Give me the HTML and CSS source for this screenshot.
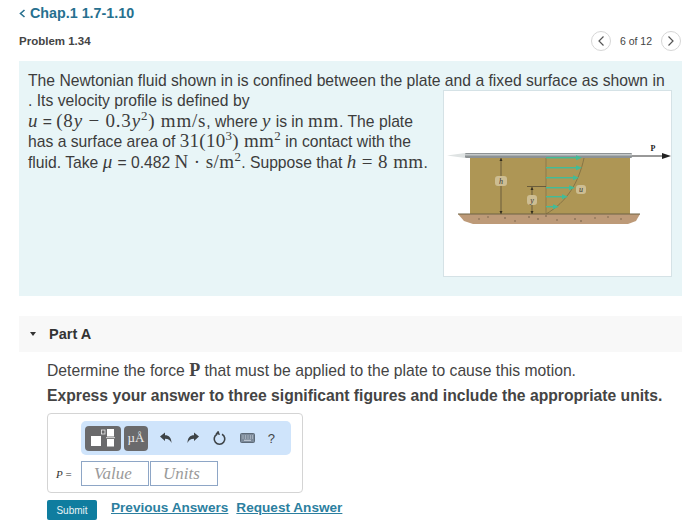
FILE: index.html
```html
<!DOCTYPE html>
<html lang="en">
<head>
  <meta charset="UTF-8" />
  <title>Problem 1.34</title>
  <link rel="stylesheet" href="styles.css">
</head>
<body>
  <a class="back" href="#"><svg class="back-icon" width="7" height="9" viewBox="0 0 7 9"><path d="M5.500 1 1.500 4.500l4 3.500" fill="none" stroke="#27708f" stroke-width="1.600"/></svg>Chap.1 1.7-1.10</a>

  <div class="prob-head">
    <span class="prob-title">Problem 1.34</span>
    <div class="pager">
      <span class="circle"><svg width="8" height="12" viewBox="0 0 8 12"><path d="M6.5 1.5 2 6l4.500 4.500" fill="none" stroke="#555" stroke-width="1.200"/></svg></span>
      <span class="count">6 of 12</span>
      <span class="circle"><svg width="8" height="12" viewBox="0 0 8 12"><path d="M1.500 1.500 6 6l-4.500 4.500" fill="none" stroke="#555" stroke-width="1.200"/></svg></span>
    </div>
  </div>

  <section class="panel">
    <p class="first">The Newtonian fluid shown in is confined between the plate and a fixed surface as shown in</p>
    <div class="panel-row">
      <p class="body-text">
        . Its velocity profile is defined by<br>
        <span class="m"><i>u</i></span> = <span class="m">(8<i>y</i> &minus; 0.3<i>y</i><sup>2</sup>) mm/s</span>, where <span class="m"><i>y</i></span> is in <span class="m">mm</span>. The plate<br>
        has a surface area of <span class="m big">31(10<sup>3</sup>) mm<sup>2</sup></span> in contact with the<br>
        fluid. Take <span class="m"><i>&mu;</i></span> = 0.482 <span class="m tight">N &middot; s/m<sup>2</sup></span>. Suppose that <span class="m tight"><i>h</i> = 8 mm</span>.
      </p>
      <div class="figure">
        <svg width="227" height="185" viewBox="1 1 227 185">
          <path d="M4 65.500 22 63v5z" fill="#dfe3e3"/>
          <rect x="27" y="68" width="160" height="56" fill="#ae9655"/>
          <path d="M15 124h182l-4 7-8 3H30l-9-3z" fill="#bd9a78"/>
          <path d="M15 124h182" stroke="#6e6244" stroke-width="1"/>
          <g fill="#6b5a44">
            <circle cx="36" cy="129" r=".7"/><circle cx="45" cy="127" r=".7"/><circle cx="62" cy="128" r=".8"/><circle cx="72" cy="131" r=".7"/>
            <circle cx="86" cy="127" r=".8"/><circle cx="95" cy="129" r=".8"/><circle cx="103" cy="126" r=".8"/><circle cx="114" cy="130" r=".7"/>
            <circle cx="132" cy="129" r=".8"/><circle cx="138" cy="131" r=".8"/><circle cx="152" cy="128" r=".7"/><circle cx="165" cy="127" r=".7"/><circle cx="178" cy="129" r=".7"/>
          </g>
          <rect x="22" y="63" width="167" height="5" rx="1" fill="#8d9294"/>
          <rect x="22" y="64" width="167" height="1.500" fill="#c5c9ca"/>
          <path d="M189 66h30" stroke="#333" stroke-width="1"/>
          <path d="M228 66l-9-3v6z" fill="#222"/>
          <text x="210" y="61" class="fig-p">P</text>
          <path d="M103 68v56" stroke="#85754a" stroke-width=".8"/>
          <path d="M103 124C124 112 136 92 141 68" fill="none" stroke="#75663f" stroke-width=".7"/>
          <g fill="#43bb97">
            <rect x="103" y="67" width="31" height="1.400"/><path d="M139 67.700l-6-2.500v5z"/>
            <rect x="103" y="77" width="31" height="1.400"/><path d="M139 77.700l-6-2.500v5z"/>
            <rect x="103" y="87" width="28" height="1.400"/><path d="M136 87.700l-6-2.500v5z"/>
            <rect x="103" y="97" width="24" height="1.400"/><path d="M132 97.700l-6-2.500v5z"/>
            <rect x="103" y="106" width="17" height="1.400"/><path d="M125 106.700l-6-2.500v5z"/>
            <rect x="103" y="116" width="8" height="1.400"/><path d="M116 116.700l-6-2.500v5z"/>
          </g>
          <path d="M58 68v56M89 97v27M84 96.500h19" stroke="#4d4530" stroke-width=".7"/>
          <path d="M58 68l-1.500 3h3zM58 124l-1.500-3h3zM89 97l-1.500 3h3zM89 124l-1.500-3h3z" fill="#332d1e"/>
          <rect x="52" y="86" width="12" height="10" rx="3" fill="#cdbd92"/>
          <rect x="84" y="105" width="10" height="10" rx="3" fill="#cdbd92"/>
          <rect x="133" y="95" width="10" height="9" rx="3" fill="#cdbd92"/>
          <text x="58" y="94" class="fig-l">h</text>
          <text x="89" y="113" class="fig-l">y</text>
          <text x="138" y="102" class="fig-l">u</text>
        </svg>
      </div>
    </div>
  </section>

  <div class="part-bar">
    <span class="caret"></span>
    <span class="part-name">Part A</span>
  </div>

  <div class="part-body">
    <p class="q">Determine the force <b class="m bold-p">P</b> that must be applied to the plate to cause this motion.</p>
    <p class="q strong">Express your answer to three significant figures and include the appropriate units.</p>

    <div class="answer-box">
      <div class="toolbar">
        <span class="tool tool-wide">
          <svg width="30" height="22" viewBox="0 0 30 22">
            <rect x="3" y="9" width="10" height="10" fill="#fff"/>
            <rect x="13.500" y="3" width="3.500" height="4" fill="none" stroke="#eee" stroke-width=".8"/>
            <rect x="19" y="2" width="7" height="7.500" fill="#fff"/>
            <rect x="19" y="12" width="7" height="7.500" fill="#fff"/>
            <path d="M18 10.700h9" stroke="#ddd"/>
          </svg>
        </span>
        <span class="tool tool-unit">&micro;&Aring;</span>
        <span class="tool-icons">
          <svg width="14" height="14" viewBox="0 0 14 14"><path d="M1 5.500 6 1.500v2.700c4 0 6.500 2.600 6.500 7.800C11 9 9.500 7.800 6 7.800v2.200z" fill="#3d4347"/></svg>
          <svg width="14" height="14" viewBox="0 0 14 14"><path d="M13 5.500 8 1.500v2.700C4 4.200 1.500 6.800 1.500 12 3 9 4.500 7.800 8 7.800v2.200z" fill="#3d4347"/></svg>
          <svg width="15" height="15" viewBox="0 0 15 15"><path d="M5 3.300a5.300 5.300 0 1 0 5 0" fill="none" stroke="#3d4347" stroke-width="1.600"/><path d="M7.500 0 7.500 5 3.500 2.500z" fill="#3d4347" transform="rotate(-20 5 3)"/></svg>
          <svg width="15" height="10" viewBox="0 0 15 10"><rect x=".5" y=".5" width="14" height="9" rx="1" fill="#7c8a9a" stroke="#5d6a78"/><path d="M2.500 3h1M5 3h1M7.500 3h1M10 3h1M12 3h1M2.500 5h1M5 5h1M7.500 5h1M10 5h1M12 5h1M4 7.300h7" stroke="#dfe6ee" stroke-width=".8"/></svg>
          <span class="help">?</span>
        </span>
      </div>
      <div class="answer-row">
        <span class="var"><i>P</i> =</span>
        <span class="field">Value</span>
        <span class="field">Units</span>
      </div>
    </div>

    <div class="actions">
      <button class="submit">Submit</button>
      <a class="link" href="#">Previous Answers</a>
      <a class="link" href="#">Request Answer</a>
    </div>
  </div>
</body>
</html>
```

FILE: styles.css
```css
body {
  margin: 0;
  padding: 5px 18px 0 19px;
  height: 522px;
  overflow: hidden;
  font-family: "Liberation Sans", Arial, sans-serif;
  color: #3c3c3c;
  background: #fff;
}
p {
  margin: 0;
}
sup {
  font-size: 68%;
  line-height: 0;
}
.back {
  display: flex;
  align-items: center;
  font-size: 14.300px;
  line-height: 17px;
  font-weight: 700;
  color: #27708f;
  text-decoration: none;
}
.back-icon {
  margin-right: 4px;
}
.prob-head {
  display: flex;
  justify-content: space-between;
  align-items: center;
  height: 22px;
  margin-top: 8px;
}
.prob-title {
  font-size: 11.500px;
  font-weight: 700;
  color: #444;
}
.pager {
  display: flex;
  align-items: center;
  gap: 9px;
  padding-right: 1px;
  font-size: 10.500px;
  color: #444;
}
.circle {
  display: flex;
  align-items: center;
  justify-content: center;
  width: 18px;
  height: 18px;
  border: 1px solid #d6d6d6;
  border-radius: 50%;
}
.panel {
  height: 235px;
  margin-top: 9px;
  padding: 10px 10px 0 9px;
  box-sizing: border-box;
  background: #e8f5f7;
  font-size: 15.700px;
  line-height: 20px;
}
.panel-row {
  display: flex;
  justify-content: space-between;
  align-items: flex-start;
}
.body-text {
  line-height: 20.500px;
}
.m {
  font-family: "Liberation Serif", "Times New Roman", serif;
  font-size: 19px;
  line-height: 0;
  letter-spacing: .8px;
}
.big {
  letter-spacing: .3px;
}
.tight {
  letter-spacing: .4px;
}
.figure {
  width: 227px;
  height: 185px;
  margin-top: -1px;
  background: #fff;
  border: 1px solid #d5e2e6;
}
.figure svg {
  display: block;
}
.fig-p {
  font: bold 8px "Liberation Serif", serif;
  fill: #222;
  text-anchor: middle;
}
.fig-l {
  font: italic 8px "Liberation Serif", serif;
  fill: #333;
  text-anchor: middle;
}
.part-bar {
  display: flex;
  align-items: center;
  height: 36px;
  margin-top: 20px;
  padding-left: 11px;
  background: #f8f8f8;
}
.caret {
  width: 0;
  height: 0;
  border-left: 3.500px solid transparent;
  border-right: 3.500px solid transparent;
  border-top: 4px solid #333;
}
.part-name {
  margin-left: 13px;
  font-size: 14.500px;
  font-weight: 700;
  color: #333;
}
.part-body {
  padding: 9px 0 0 28px;
}
.q {
  font-size: 15.700px;
  line-height: 20px;
  margin-bottom: 5px;
  color: #444;
}
.strong {
  font-weight: 700;
}
.bold-p {
  font-size: 18px;
  letter-spacing: 0;
}
.answer-box {
  width: 256px;
  height: 80px;
  box-sizing: border-box;
  margin-top: 7px;
  padding: 7px 0 0 33px;
  border: 1px solid #d4d4d4;
  border-radius: 4px;
}
.toolbar {
  display: flex;
  align-items: center;
  width: 210px;
  height: 34px;
  box-sizing: border-box;
  padding-left: 4px;
  background: #cfe4fb;
  border-radius: 5px;
}
.tool {
  display: flex;
  align-items: center;
  justify-content: center;
  height: 25px;
  background: #6a6a6c;
  border-radius: 4px;
  color: #eee;
}
.tool-wide {
  width: 36px;
}
.tool-unit {
  width: 24px;
  margin-left: 3px;
  font: 13px "Liberation Serif", serif;
}
.tool-icons {
  display: flex;
  align-items: center;
  justify-content: space-between;
  width: 116px;
  margin-left: 11px;
}
.help {
  font-size: 13px;
  color: #444;
}
.answer-row {
  display: flex;
  align-items: center;
  gap: 1px;
  margin-top: 6px;
  position: relative;
}
.var {
  position: absolute;
  left: -25px;
  font: 11px "Liberation Serif", serif;
  color: #333;
}
.field {
  width: 68px;
  height: 25px;
  box-sizing: border-box;
  padding-left: 12px;
  border: 1px solid #8ea6c6;
  font: italic 17px/23px "Liberation Serif", serif;
  color: #9a9a9a;
}
.actions {
  display: flex;
  align-items: flex-start;
  margin-top: 7px;
}
.submit {
  width: 50px;
  height: 20px;
  padding: 0;
  border: none;
  border-radius: 2px;
  background: #0f7d9f;
  color: #e8f3f6;
  font: 10px "Liberation Sans", sans-serif;
}
.link {
  font-size: 13.600px;
  line-height: 15px;
  font-weight: 700;
  color: #2c7f9f;
  margin-left: 8px;
}
.submit + .link {
  margin-left: 14px;
}
```
